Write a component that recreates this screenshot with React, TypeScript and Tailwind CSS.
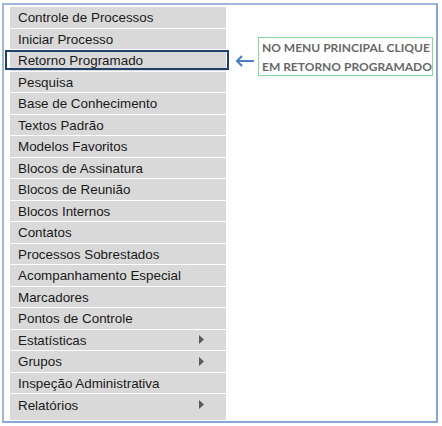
import React from "react";

const items: { label: string; sub?: boolean }[] = [
  { label: "Controle de Processos" },
  { label: "Iniciar Processo" },
  { label: "Retorno Programado" },
  { label: "Pesquisa" },
  { label: "Base de Conhecimento" },
  { label: "Textos Padrão" },
  { label: "Modelos Favoritos" },
  { label: "Blocos de Assinatura" },
  { label: "Blocos de Reunião" },
  { label: "Blocos Internos" },
  { label: "Contatos" },
  { label: "Processos Sobrestados" },
  { label: "Acompanhamento Especial" },
  { label: "Marcadores" },
  { label: "Pontos de Controle" },
  { label: "Estatísticas", sub: true },
  { label: "Grupos", sub: true },
  { label: "Inspeção Administrativa" },
  { label: "Relatórios", sub: true },
];

export default function App() {
  return (
    <div className="w-[442px] h-[426px] bg-white pl-[2px] pt-[3px]">
      <div className="w-[436px] h-[420px] border-2 border-[#9db7df] border-r-[#87a5d6] border-b-[#87a5d6] flex">
        <div className="ml-[6px] mt-[2px] w-[216px] h-[413px] bg-[#d9d9d9] flex flex-col shrink-0">
          {items.map((it, i) => (
            <div
              key={it.label}
              className={
                "relative h-[21.5px] shrink-0 flex items-center pl-[8px] pr-[20px] text-[13.4px] leading-none text-[#1a1a1a] " +
                (i < items.length - 1 ? "border-b border-white" : "")
              }
              style={{ fontFamily: '"Liberation Sans", Arial, sans-serif' }}
            >
              <span className="flex-1 pt-[1px] whitespace-nowrap">{it.label}</span>
              {it.sub && (
                <svg width="5" height="9" viewBox="0 0 5 9" className="mr-[2px]">
                  <polygon points="0,0 5,4.5 0,9" fill="#5a5a5a" />
                </svg>
              )}
              {i === 2 && (
                <div className="absolute left-[-5px] right-[-3px] top-[0px] bottom-[1px] border-2 border-[#20406a]" />
              )}
            </div>
          ))}
        </div>
        <div className="flex items-start mt-[32px] shrink-0">
          <svg width="20" height="12" viewBox="0 0 20 12" className="ml-[9px] mt-[18px] shrink-0">
            <path d="M2 6 H19" stroke="#4a7cc2" strokeWidth="2" />
            <path d="M7 1 L2 6 L7 11" stroke="#4a7cc2" strokeWidth="2" fill="none" />
          </svg>
          <div
            className="ml-[3px] w-[175px] h-[39px] shrink-0 border-[1.5px] border-[#86d6a0] flex flex-col justify-center pl-[3px] text-[12px] font-bold leading-[19px] text-[#686868] whitespace-nowrap"
            style={{ fontFamily: 'Lato, "Open Sans", sans-serif' }}
          >
            <div>NO MENU PRINCIPAL CLIQUE</div>
            <div>EM RETORNO PROGRAMADO</div>
          </div>
        </div>
      </div>
    </div>
  );
}
